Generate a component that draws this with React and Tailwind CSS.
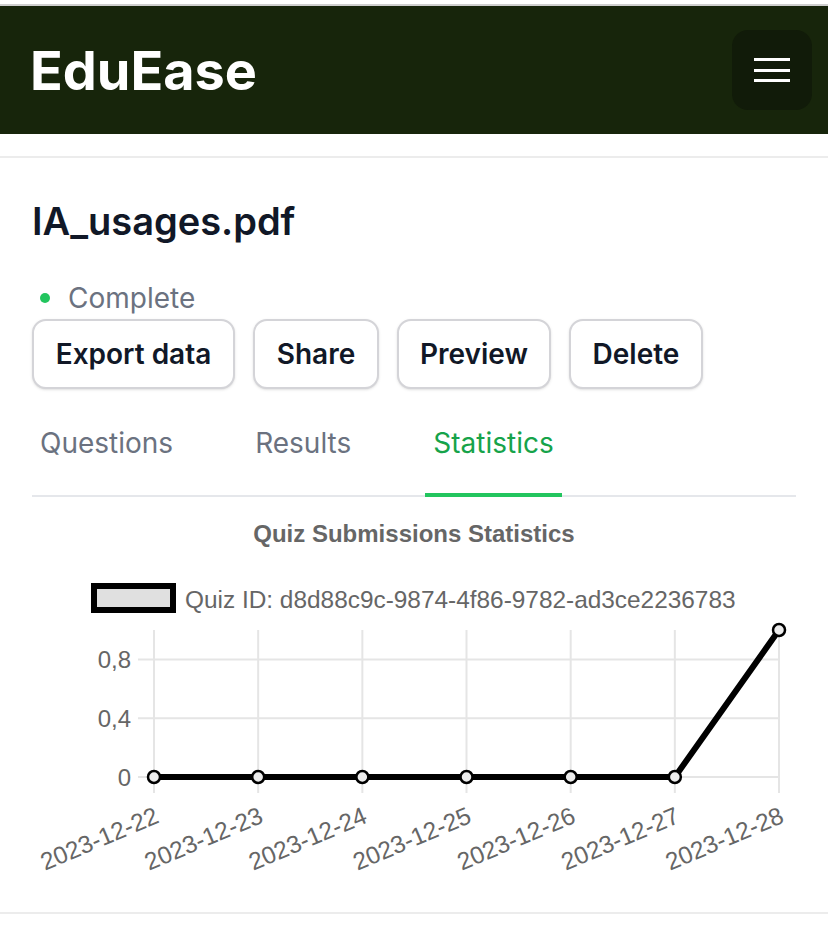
import React from "react";

const dates = [
  "2023-12-22",
  "2023-12-23",
  "2023-12-24",
  "2023-12-25",
  "2023-12-26",
  "2023-12-27",
  "2023-12-28",
];
const values = [0, 0, 0, 0, 0, 0, 1];

// chart geometry (svg coords)
const left = 122;
const step = 104.17;
const top = 133;
const bottom = 280;

function xAt(i) {
  return left + i * step;
}
function yAt(v) {
  return bottom - v * (bottom - top);
}

function StatsChart() {
  const points = values.map((v, i) => `${xAt(i)},${yAt(v)}`).join(" ");
  return (
    <svg width="764" height="415" viewBox="0 0 764 415" className="block" style={{ fontFamily: '"Liberation Sans", Arial, sans-serif' }}>
      <text x="382" y="36" textAnchor="middle" dominantBaseline="central" fontSize="24" fontWeight="700" fill="#666">
        Quiz Submissions Statistics
      </text>

      {/* legend */}
      <rect x="62" y="89" width="79" height="24" fill="#e0e0e0" stroke="#000" strokeWidth="6" />
      <text x="153" y="102" dominantBaseline="central" fontSize="24.4" fill="#666">
        Quiz ID: d8d88c9c-9874-4f86-9782-ad3ce2236783
      </text>

      {/* grid */}
      {[0, 0.4, 0.8].map((v) => (
        <line key={v} x1="106" x2={xAt(6)} y1={yAt(v)} y2={yAt(v)} stroke="#e5e5e5" strokeWidth="2" />
      ))}
      {dates.map((d, i) => (
        <line key={d} x1={xAt(i)} x2={xAt(i)} y1={top} y2="296" stroke="#e5e5e5" strokeWidth="2" />
      ))}

      {/* y labels */}
      {[
        ["0,8", 0.8],
        ["0,4", 0.4],
        ["0", 0],
      ].map(([t, v]) => (
        <text key={t} x="99" y={yAt(v)} textAnchor="end" dominantBaseline="central" fontSize="24" fill="#666">
          {t}
        </text>
      ))}

      {/* data */}
      <polyline points={points} fill="none" stroke="#000" strokeWidth="6" strokeLinejoin="round" />
      {values.map((v, i) => (
        <circle key={i} cx={xAt(i)} cy={yAt(v)} r="6" fill="#ececec" stroke="#000" strokeWidth="2.5" />
      ))}

      {/* x labels */}
      {dates.map((d, i) => (
        <text
          key={d}
          x={xAt(i) + 3}
          y="317"
          textAnchor="end"
          dominantBaseline="central"
          fontSize="24.5"
          fill="#666"
          transform={`rotate(-23 ${xAt(i) + 3} 317)`}
        >
          {d}
        </text>
      ))}
    </svg>
  );
}

function Btn({ w, children }) {
  return (
    <button className={`h-[70px] ${w} rounded-[14px] border-2 border-[#d4d4d8] bg-white text-[28px] font-semibold text-[#111827] shadow-sm`}>
      {children}
    </button>
  );
}

export default function App() {
  return (
    <div className="w-[828px] min-h-[928px] bg-white" style={{ fontFamily: 'Inter, "Noto Sans", sans-serif' }}>
      <div className="h-[4px] bg-white" />
      <div className="h-[2px] bg-[#cfcfcf]" />
      <header className="h-[128px] bg-[#17250b] flex items-center justify-between pl-[30px] pr-[16px]">
        <span className="text-white text-[54px] font-bold">EduEase</span>
        <button className="w-[80px] h-[80px] rounded-[16px] bg-[#111b09] flex flex-col items-center justify-center gap-[7.5px]">
          <span className="block w-[36px] h-[3px] bg-white" />
          <span className="block w-[36px] h-[3px] bg-white" />
          <span className="block w-[36px] h-[3px] bg-white" />
        </button>
      </header>
      <div className="h-[22px]" />
      <section className="border-t-2 border-b-2 border-[#ececec] px-8 pt-[43px]">
        <h1 className="text-[38px] leading-[40px] font-semibold text-[#111827]">IA_usages.pdf</h1>
        <div className="mt-[37px] h-[40px] flex items-center pl-2 gap-[18px]">
          <span className="w-[10px] h-[10px] rounded-full bg-[#22c55e]" />
          <span className="text-[28px] text-[#6b7280]">Complete</span>
        </div>
        <div className="mt-px flex gap-[18px]">
          <Btn w="w-[203px]">Export data</Btn>
          <Btn w="w-[126px]">Share</Btn>
          <Btn w="w-[154px]">Preview</Btn>
          <Btn w="w-[134px]">Delete</Btn>
        </div>
        <div className="mt-[34px] flex gap-[66px] border-b-2 border-[#e5e7eb]">
          <div className="-mb-[2px] px-2 pb-[30px] border-b-4 border-transparent text-[28px] leading-[40px] text-[#6b7280]">Questions</div>
          <div className="-mb-[2px] px-2 pb-[30px] border-b-4 border-transparent text-[28px] leading-[40px] text-[#6b7280]">Results</div>
          <div className="-mb-[2px] px-2 pb-[30px] border-b-4 border-[#22c55e] text-[28px] leading-[40px] text-[#16a34a]">Statistics</div>
        </div>
        <StatsChart />
      </section>
    </div>
  );
}
